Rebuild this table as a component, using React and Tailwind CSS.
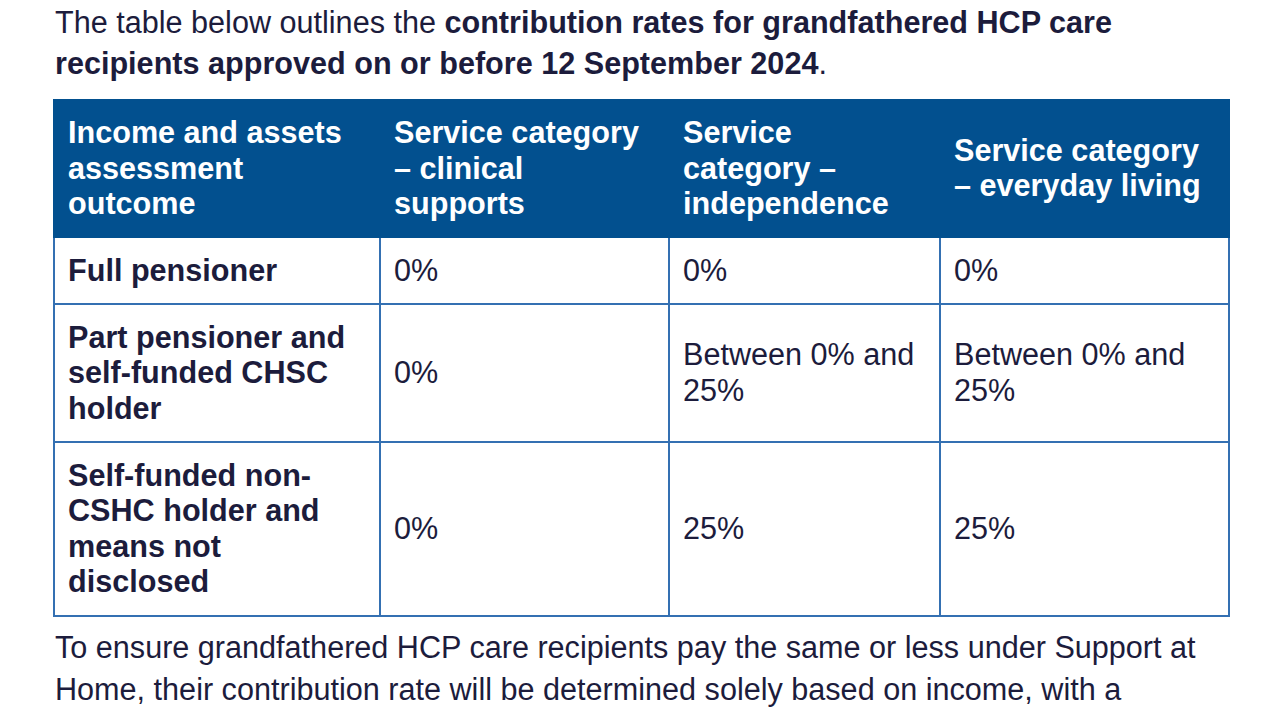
import React from "react";

const font = { fontFamily: '"Liberation Sans", Arial, sans-serif' };

function Cell({ children, bold, head, className = "" }) {
  return (
    <td
      className={
        "align-middle px-[13px] leading-[35.5px] whitespace-nowrap " +
        (head
          ? "bg-[#02508f] text-white font-bold border-2 border-[#02508f] "
          : "border-2 border-[#3470b2] text-[#1c1c3c] ") +
        (bold ? "font-bold " : "") +
        className
      }
    >
      {children}
    </td>
  );
}

export default function App() {
  return (
    <div className="w-[1280px] h-[720px] bg-white overflow-hidden text-[30.6px]" style={font}>
      <div className="pl-[53px] pt-[2px]">
        <p className="ml-[2px] leading-[41px] text-[#1c1c3c] whitespace-nowrap">
          The table below outlines the <b>contribution rates for grandfathered HCP care</b>
          <br />
          <b>recipients approved on or before 12 September 2024</b>.
        </p>
        <table className="mt-[15px] border-collapse table-fixed w-[1175px] border-2 border-[#3470b2]">
          <colgroup>
            <col className="w-[326px]" />
            <col className="w-[289px]" />
            <col className="w-[271px]" />
            <col className="w-[289px]" />
          </colgroup>
          <thead>
            <tr>
              <Cell head className="py-[14px]">
                Income and assets
                <br />
                assessment
                <br />
                outcome
              </Cell>
              <Cell head className="py-[14px]">
                Service category
                <br />– clinical
                <br />
                supports
              </Cell>
              <Cell head className="py-[14px]">
                Service
                <br />
                category –
                <br />
                independence
              </Cell>
              <Cell head className="py-[14px]">
                Service category
                <br />– everyday living
              </Cell>
            </tr>
          </thead>
          <tbody>
            <tr>
              <Cell bold className="py-[15px]">Full pensioner</Cell>
              <Cell className="py-[15px]">0%</Cell>
              <Cell className="py-[15px]">0%</Cell>
              <Cell className="py-[15px]">0%</Cell>
            </tr>
            <tr>
              <Cell bold className="py-[14.5px]">
                Part pensioner and
                <br />
                self-funded CHSC
                <br />
                holder
              </Cell>
              <Cell className="py-[14.5px]">0%</Cell>
              <Cell className="py-[14.5px]">
                Between 0% and
                <br />
                25%
              </Cell>
              <Cell className="py-[14.5px]">
                Between 0% and
                <br />
                25%
              </Cell>
            </tr>
            <tr>
              <Cell bold className="py-[15px]">
                Self-funded non-
                <br />
                CSHC holder and
                <br />
                means not
                <br />
                disclosed
              </Cell>
              <Cell className="py-[15px]">0%</Cell>
              <Cell className="py-[15px]">25%</Cell>
              <Cell className="py-[15px]">25%</Cell>
            </tr>
          </tbody>
        </table>
        <p className="ml-[2px] mt-[9px] leading-[42px] text-[#1c1c3c] whitespace-nowrap">
          To ensure grandfathered HCP care recipients pay the same or less under Support at
          <br />
          Home, their contribution rate will be determined solely based on income, with a
        </p>
      </div>
    </div>
  );
}
